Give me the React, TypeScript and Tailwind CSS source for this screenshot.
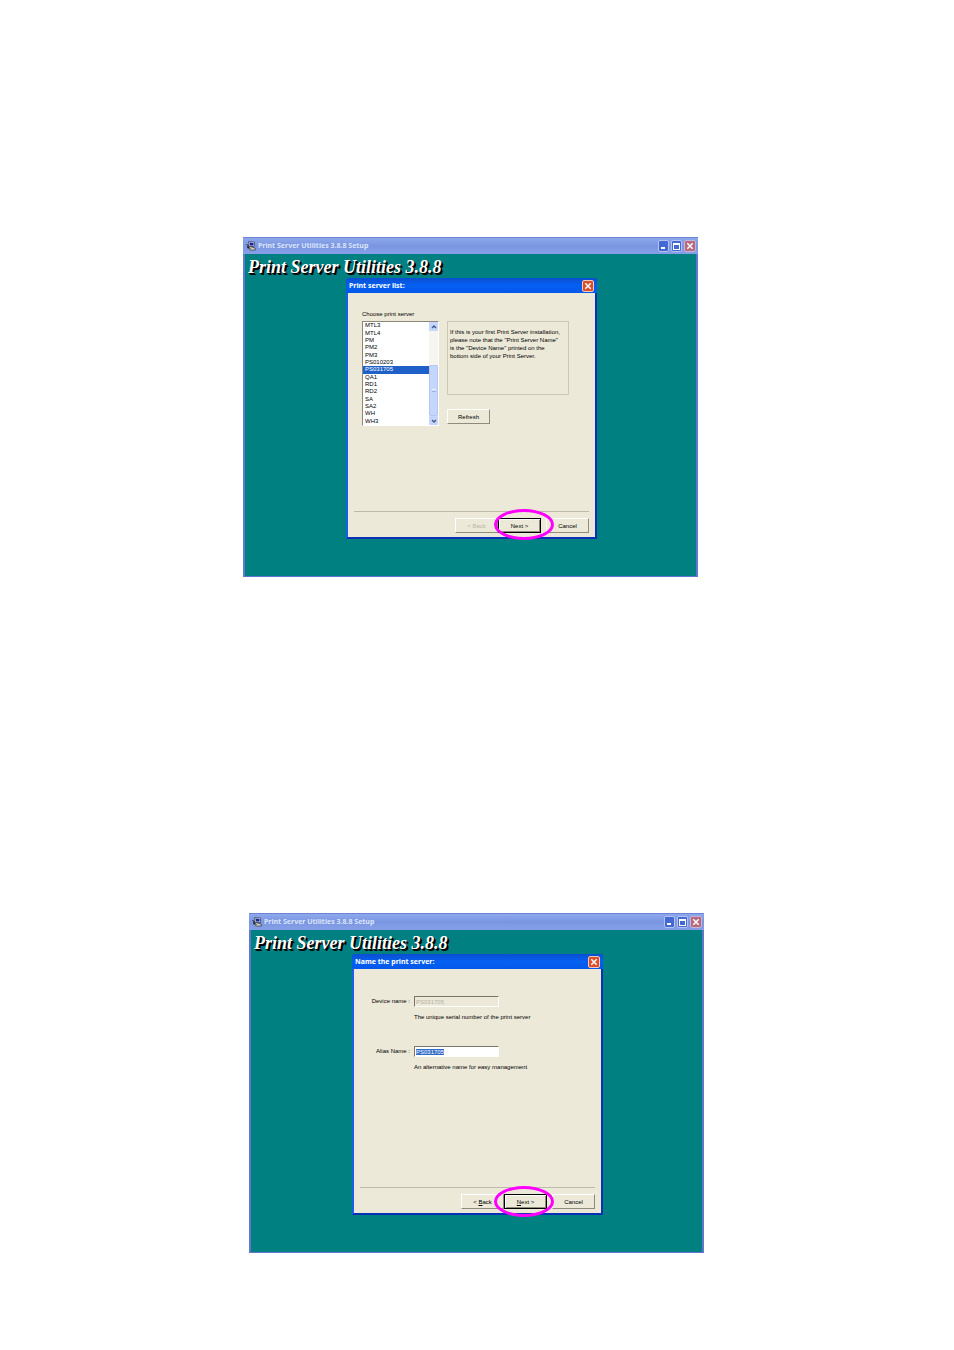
import { ReactNode, useEffect, useRef, useState } from "react";

const servers = [
  "MTL3",
  "MTL4",
  "PM",
  "PM2",
  "PM3",
  "PS010203",
  "PS031705",
  "QA1",
  "RD1",
  "RD2",
  "SA",
  "SA2",
  "WH",
  "WH3",
];

function SetupIcon() {
  return (
    <svg className="h-[10px] w-[10px]" viewBox="0 0 20 20" aria-hidden="true">
      <path d="M5 1 17 2 17 11 6 11Z" fill="#d5d8de" stroke="#25304c" strokeWidth="1.2" />
      <path d="M7 3 15 4 15 9 8 9Z" fill="#17239a" />
      <path d="M2 13 8 11 18 14 19 18 9 18Z" fill="#d2cfc2" stroke="#20242c" strokeWidth="1.2" />
      <path d="M1 7 5 9 3 12 9 15" fill="none" stroke="#1a1a26" strokeWidth="2" />
    </svg>
  );
}

function CloseIcon() {
  return (
    <svg className="h-[8px] w-[8px]" viewBox="0 0 8 8" aria-hidden="true">
      <path d="M1.3 1.3 6.7 6.7M6.7 1.3 1.3 6.7" stroke="#fff" strokeWidth="1.5" />
    </svg>
  );
}

function SetupWindow({ className, children }: { className: string; children: ReactNode }) {
  return (
    <section
      className={`w-full max-w-[455px] border-x-2 border-b border-[#5e78cf] bg-[#008080] ${className}`}
    >
      <header className="-mx-[2px] flex h-[17px] items-center gap-[2px] border-t border-[#6d83d6] bg-linear-to-b from-[#8fa8ec] via-[#7b96e1] to-[#86a0e8] pr-[2px] pl-[3px]">
        <SetupIcon />
        <h2 className="flex-1 font-['Noto_Sans',sans-serif] text-[7px] leading-[10px] font-bold whitespace-nowrap text-[#dbe4fb]">
          Print Server Utilities 3.8.8 Setup
        </h2>
        <div className="flex gap-[2px]">
          <button
            type="button"
            aria-label="Minimize"
            className="flex h-[12px] w-[11px] items-end rounded-[2px] border border-[#b3c3f3] bg-[#4469d3] p-[2px]"
          >
            <span className="h-[2px] w-[4px] bg-white" />
          </button>
          <button
            type="button"
            aria-label="Maximize"
            className="flex h-[12px] w-[11px] items-center justify-center rounded-[2px] border border-[#b3c3f3] bg-[#4469d3]"
          >
            <span className="h-[7px] w-[7px] border border-t-2 border-white" />
          </button>
          <button
            type="button"
            aria-label="Close"
            className="flex h-[12px] w-[12px] items-center justify-center rounded-[2px] border border-[#c5b5da] bg-[#b9697c]"
          >
            <CloseIcon />
          </button>
        </div>
      </header>
      <h1 className="pt-[2px] pl-[3px] font-['Liberation_Serif',serif] text-[18px] leading-[22px] font-bold whitespace-nowrap text-white italic [text-shadow:1px_1px_0_#000,2px_2px_0_#000]">
        Print Server Utilities 3.8.8
      </h1>
      {children}
    </section>
  );
}

function Dialog({ title, children }: { title: string; children: ReactNode }) {
  return (
    <div
      role="dialog"
      aria-label={title}
      className="mb-[37px] ml-[101px] flex min-h-[261px] w-[251px] flex-col rounded-t-[3px] border-2 border-t-0 border-[#0831b4] border-l-[#1c5fe6] bg-[#ece9d8]"
    >
      <header className="-mx-[2px] flex h-[15px] items-center justify-between rounded-t-[3px] bg-linear-to-b from-[#0a4fd2] via-[#0560f2] to-[#0458ea] pr-[3px] pl-[3px]">
        <h3 className="font-['Noto_Sans',sans-serif] text-[7px] leading-[10px] font-bold text-white">{title}</h3>
        <button
          type="button"
          aria-label="Close dialog"
          className="flex h-[12px] w-[12px] items-center justify-center rounded-[2px] border border-[#f3c9bd] bg-[#dd4f2c]"
        >
          <CloseIcon />
        </button>
      </header>
      {children}
    </div>
  );
}

const buttonClass =
  "h-[15px] w-[43px] border border-t-white border-l-white border-r-[#8f8c7c] border-b-[#8f8c7c] bg-[#ece9d8] text-[6px] leading-[8px] disabled:text-[#b9b6a6]";

function Footer({ back, next, backDisabled }: { back: ReactNode; next: ReactNode; backDisabled?: boolean }) {
  return (
    <footer className="mx-[6px] mt-auto mb-[4px] flex justify-end border-t border-[#bdbaad] pt-[6px]">
      <button type="button" disabled={backDisabled} className={buttonClass}>
        &lt; {back}
      </button>
      <button
        type="button"
        className="mr-[5px] h-[15px] w-[43px] border border-black bg-[#ece9d8] text-[6px] leading-[8px] shadow-[inset_1px_1px_0_#fff,inset_-1px_-1px_0_#8f8c7c]"
      >
        {next} &gt;
      </button>
      <button type="button" className={buttonClass}>
        Cancel
      </button>
    </footer>
  );
}

// Pink ring drawn around the button the reader has to press
function Ring({ className }: { className: string }) {
  return (
    <span
      aria-hidden="true"
      className={`pointer-events-none absolute h-[31px] w-[60px] rounded-[50%] border-[3px] border-[#ff00ff] ${className}`}
    />
  );
}

function ScrollArrow({ up }: { up?: boolean }) {
  return (
    <button
      type="button"
      aria-label={up ? "Scroll up" : "Scroll down"}
      className="flex h-[9px] items-center justify-center rounded-[1px] bg-[#c6d5fb]"
    >
      <svg className="h-[6px] w-[6px]" viewBox="0 0 6 6" aria-hidden="true">
        <path d={up ? "M1 4 3 2 5 4" : "M1 2 3 4 5 2"} fill="none" stroke="#3f578f" strokeWidth="1.4" />
      </svg>
    </button>
  );
}

function ServerList() {
  const [selected, setSelected] = useState("PS031705");

  return (
    <div className="flex h-[105px] w-[77px] border border-white border-t-[#8a887a] border-l-[#8a887a] bg-white">
      <ul role="listbox" aria-labelledby="server-label" className="grid flex-1 auto-rows-fr">
        {servers.map((name) => (
          <li
            key={name}
            role="option"
            aria-selected={name === selected}
            onClick={() => setSelected(name)}
            className="flex items-center pl-[2px] text-[6px] leading-[7px] aria-selected:bg-[#1f5fc8] aria-selected:text-white"
          >
            {name}
          </li>
        ))}
      </ul>
      <div className="flex w-[9px] flex-col bg-[#f6f5ef]">
        <ScrollArrow up />
        <div className="mt-auto flex h-[51px] flex-col items-center justify-center gap-[1px] rounded-[1px] border border-[#b4c8f6] bg-[#c6d5fb]">
          <span className="h-px w-[4px] bg-[#eef3ff]" />
          <span className="h-px w-[4px] bg-[#9db5ee]" />
        </div>
        <ScrollArrow />
      </div>
    </div>
  );
}

function Field({
  id,
  label,
  hint,
  disabled,
}: {
  id: string;
  label: string;
  hint: string;
  disabled?: boolean;
}) {
  const ref = useRef<HTMLInputElement>(null);

  useEffect(() => {
    if (!disabled) ref.current?.select();
  }, [disabled]);

  return (
    <div className="grid grid-cols-[56px_1fr] gap-x-[4px] gap-y-[6px]">
      <label htmlFor={id} className="text-right leading-[11px] whitespace-nowrap">
        {label}
      </label>
      <input
        ref={ref}
        id={id}
        defaultValue="PS031705"
        disabled={disabled}
        aria-describedby={`${id}-hint`}
        className="h-[11px] w-[85px] border border-white border-t-[#77756a] border-l-[#77756a] bg-white px-px text-[6px] leading-[8px] outline-none selection:bg-[#316ac5] selection:text-white disabled:bg-[#ece9d8] disabled:text-[#b3b0a2]"
      />
      <p id={`${id}-hint`} className="col-start-2 leading-[8px]">
        {hint}
      </p>
    </div>
  );
}

export default function App() {
  return (
    <main className="flex min-h-screen flex-col items-center gap-[336px] bg-white pt-[237px] pb-24 font-['Liberation_Sans',Arial,sans-serif] text-[6px] leading-[8px] text-black">
      <SetupWindow className="mr-[13px]">
        <div className="relative">
          <Dialog title="Print server list:">
            <div className="flex gap-[8px] pt-[17px] pl-[14px]">
              <div>
                <p id="server-label" className="mb-[3px]">
                  Choose print server
                </p>
                <ServerList />
              </div>
              <div className="pt-[11px]">
                <p className="h-[74px] w-[122px] border border-[#cbc8b8] pt-[6px] pl-[2px] whitespace-nowrap">
                  If this is your first Print Server installation,
                  <br />
                  please note that the "Print Server Name"
                  <br />
                  is the "Device Name" printed on the
                  <br />
                  bottom side of your Print Server.
                </p>
                <button type="button" className={`mt-[14px] ${buttonClass}`}>
                  Refresh
                </button>
              </div>
            </div>
            <Footer back="Back" next="Next" backDisabled />
          </Dialog>
          <Ring className="top-[231px] left-[249px]" />
        </div>
      </SetupWindow>

      <SetupWindow className="mr-px">
        <div className="relative">
          <Dialog title="Name the print server:">
            <form className="flex flex-col gap-[25px] pt-[27px]">
              <Field
                id="device"
                label="Device name :"
                hint="The unique serial number of the print server"
                disabled
              />
              <Field id="alias" label="Alias Name :" hint="An alternative name for easy management" />
            </form>
            <Footer
              back={
                <>
                  <u>B</u>ack
                </>
              }
              next={
                <>
                  <u>N</u>ext
                </>
              }
            />
          </Dialog>
          <Ring className="top-[232px] left-[243px]" />
        </div>
      </SetupWindow>
    </main>
  );
}
